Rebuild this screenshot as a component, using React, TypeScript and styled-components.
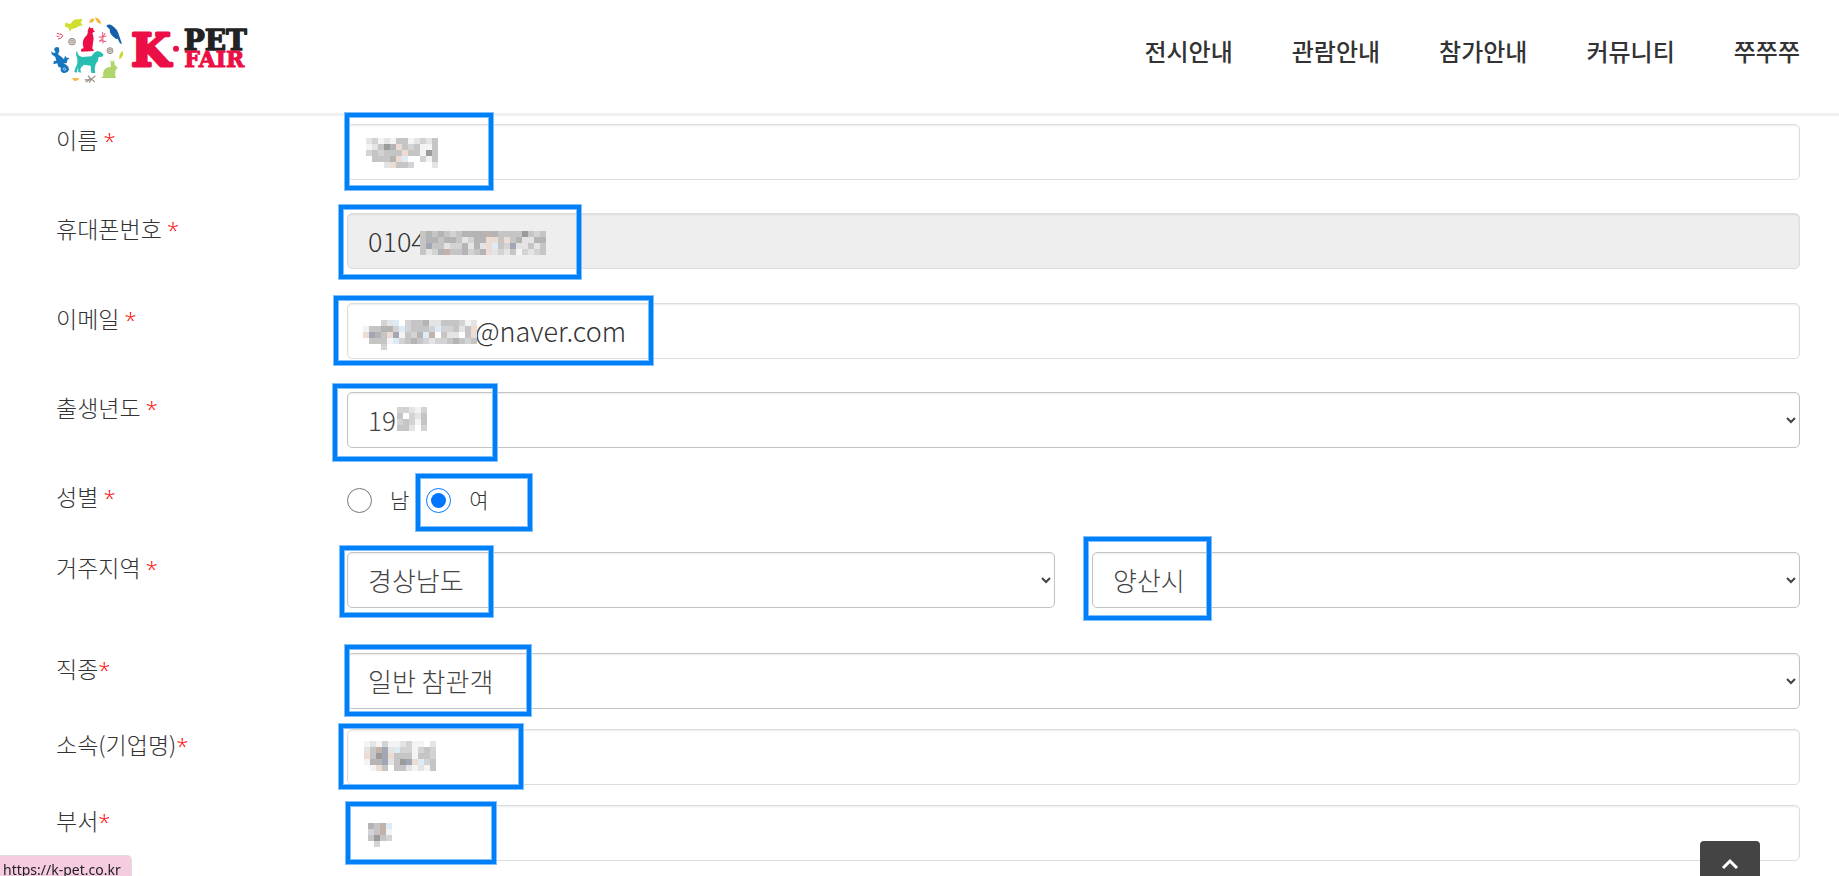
import React from 'react';
import styled, { createGlobalStyle } from 'styled-components';

const GlobalStyle = createGlobalStyle`
  *, *::before, *::after { box-sizing: border-box; }
  body {
    margin: 0;
    background: #fff;
    color: #333;
    font-family: 'Noto Sans CJK KR', sans-serif;
    font-weight: 300;
    overflow-x: hidden;
  }
  input, select, button { font-family: inherit; font-weight: inherit; }
`;

const Header = styled.header`
  display: flex;
  justify-content: space-between;
  align-items: flex-start;
  height: 116px;
  padding: 15px 39px 0 50px;
  border-bottom: 3px solid #efefef;
`;

const LogoLink = styled.a`
  display: block;
  line-height: 0;
`;

const Nav = styled.nav`
  display: flex;
  gap: 59px;
  padding-top: 18px;
`;

const NavLink = styled.a`
  color: #333;
  font-size: 24px;
  line-height: 36px;
  font-weight: 500;
  text-decoration: none;
`;

const Form = styled.form`
  padding: 8px 39px 14px 56px;
`;

const Row = styled.div<{ $gap?: number }>`
  display: grid;
  grid-template-columns: 291px minmax(0, 1fr);
  margin-bottom: ${p => p.$gap ?? 33}px;
`;

const Label = styled.label`
  font-size: 23px;
  line-height: 30px;
`;

const Required = styled.span`
  color: #f00;
  font-family: 'Open Sans', sans-serif;
  font-size: 22px;
`;

const Field = styled.div`
  position: relative;
  flex: 1;
  min-width: 0;
`;

const Pair = styled.div`
  display: flex;
  gap: 37px;
`;

const TextInput = styled.input<{ $indent?: number }>`
  display: block;
  width: 100%;
  height: 56px;
  padding: 0 20px 2px ${p => p.$indent ?? 20}px;
  border: 1px solid #ddd;
  border-radius: 5px;
  background: ${p => (p.readOnly ? '#eee' : '#fff')};
  box-shadow: inset 0 1px 2px rgba(0, 0, 0, 0.08);
  color: #333;
  font-size: 27px;
`;

const Select = styled.select`
  display: block;
  width: 100%;
  height: 56px;
  padding: 0 16px 2px;
  border: 1px solid #c4c4c4;
  border-radius: 5px;
  background: #fff;
  box-shadow: inset 0 1px 2px rgba(0, 0, 0, 0.08);
  color: #444;
  font-size: 26px;
`;

const RadioGroup = styled.div`
  position: relative;
  display: flex;
  align-items: center;
  height: 38px;
`;

const Radio = styled.input`
  width: 25px;
  height: 25px;
  margin: 0 18px 0 0;
  accent-color: #0075ff;
`;

const RadioLabel = styled.label`
  margin-right: 17px;
  padding-bottom: 2px;
  font-size: 21px;
  line-height: 30px;
`;

const Highlight = styled.span<{ $x: number; $y: number; $w: number; $h: number }>`
  position: absolute;
  left: ${p => p.$x}px;
  top: ${p => p.$y}px;
  width: ${p => p.$w}px;
  height: ${p => p.$h}px;
  border: 4px solid #0080f8;
  box-shadow: 0 0 0 1px #7fbffb, inset 0 0 0 1px #7fbffb;
  pointer-events: none;
`;

const MosaicSvg = styled.svg<{ $x: number; $y: number }>`
  position: absolute;
  left: ${p => p.$x}px;
  top: ${p => p.$y}px;
  pointer-events: none;
`;

const StatusUrl = styled.div`
  position: fixed;
  left: 0;
  bottom: 0;
  height: 21px;
  padding: 3px 10px 0 3px;
  border-top: 1px solid #ddd;
  border-right: 1px solid #ddd;
  border-top-right-radius: 5px;
  background: #f6cce0;
  color: #222;
  font-family: 'Noto Sans', sans-serif;
  font-weight: 400;
  font-size: 14px;
  line-height: 21px;
`;

const TopButton = styled.button`
  position: fixed;
  right: 79px;
  bottom: 0;
  width: 60px;
  height: 35px;
  padding: 10px 0 0;
  border: 0;
  border-radius: 4px 4px 0 0;
  background: #444;
  line-height: 0;
`;

const shades: Record<string, string> = {
  a: '#f4f4f4', b: '#e4e4e4', c: '#d3d3d5', d: '#c5c5c5', e: '#b4b4b4', f: '#9b9b9b',
  p: '#ecdcd4', q: '#dcebf6', r: '#a2a7b6', o: '#c3b2aa', w: '#fff',
};

function Mosaic({ x, y, rows }: { x: number; y: number; rows: string[] }) {
  const cols = Math.max(...rows.map(r => r.length));
  return (
    <MosaicSvg $x={x} $y={y} width={cols * 6} height={rows.length * 6} shapeRendering="crispEdges" aria-hidden="true">
      {rows.flatMap((row, j) =>
        row.split('').map((c, i) =>
          shades[c] ? <rect key={`${i}-${j}`} x={i * 6} y={j * 6} width={6} height={6} fill={shades[c]} /> : null,
        ),
      )}
    </MosaicSvg>
  );
}

function Logo() {
  return (
    <svg width="202" height="70" viewBox="60 45 606 210" role="img" aria-label="K-PET FAIR">
      <path d="M106 68 L122 72 Q128 57 144 58 L158 57 L152 68 L159 76 L146 79 Q136 88 125 86 L119 96 L116 84 L105 80Z" fill="#cfdf2b" />
      <path d="M177 68 Q182 52 194 57 L188 67Z M194 52 Q210 54 214 72 L203 68Z" fill="#f9b233" />
      <path d="M178 80 L183 85 L189 83 L190 90 L195 94 L187 99 Q193 112 189 128 L187 145 L192 153 L154 155 Q150 146 161 145 Q154 126 165 111 Q175 103 173 92Z" fill="#eb0f45" />
      <path d="M80 102 Q83 97 89 103 Q96 100 98 107 Q96 116 84 117 M80 109 L88 109" fill="none" stroke="#e9486c" strokeWidth="3" />
      <path d="M218 96 L219 130 M206 112 L229 108 M209 126 L226 99 M208 121 L229 125" fill="none" stroke="#ec4f78" strokeWidth="3" />
      <g fill="#d8d2cc" stroke="#9b928a" strokeWidth="3">
        <circle cx="126" cy="125" r="10" />
        <circle cx="240" cy="152" r="9" />
      </g>
      <path d="M119 124 Q126 116 132 124 Q127 132 122 126 M234 151 Q240 144 245 151 Q240 158 236 153" fill="none" stroke="#8e857d" strokeWidth="2" />
      <path d="M229 78 Q236 70 247 77 Q263 88 266 103 L276 132 L270 130 L263 116 L258 117 L250 110 Q239 103 239 88Z" fill="#165daa" />
      <path d="M72 148 Q77 137 87 143 L88 153 L84 163 L94 170 L102 178 L105 167 L110 173 L119 174 L112 180 L110 190 L100 190 Q117 196 117 210 Q111 222 98 218 Q89 213 93 203 L85 200 L82 190 L70 193 L72 182 L79 183 L76 171 L65 163 L64 153 L69 158 L77 158Z" fill="#1676bd" />
      <path d="M98 207 Q105 200 108 208 Q104 214 100 209" fill="none" stroke="#fff" strokeWidth="2" />
      <path d="M141 153 Q143 169 157 171 L184 169 Q192 156 202 153 L212 156 L221 164 L217 170 L206 171 Q205 185 197 192 L194 207 L196 219 L184 219 L182 197 L162 194 Q154 199 151 207 L153 218 L145 216 L144 202 L140 218 L133 216 Q136 201 142 191 L142 176 Q136 166 139 154Z" fill="#27bdb1" />
      <path d="M241 180 L247 186 L252 179 L254 194 L263 204 L257 210 L255 223 L258 234 L214 234 L220 227 Q217 207 234 202 L243 200Z" fill="#afd66b" />
      <path d="M268 173 Q268 157 279 153 L279 165 Q275 176 268 178Z" fill="#c9dc2c" />
      <path d="M125 234 L147 235 Q145 243 134 243Z" fill="#f9b233" />
      <path d="M164 239 Q179 243 196 228 M174 227 L182 237 M178 248 L184 237 L194 245 M167 246 L178 240" fill="none" stroke="#9e9389" strokeWidth="4" />
      <g fontFamily="'DejaVu Serif', serif" fontWeight="700" strokeLinejoin="round">
        <text x="304" y="199" fontSize="136" fill="#eb0f45" stroke="#eb0f45" strokeWidth="9">K</text>
        <circle cx="438" cy="146" r="9" fill="#eb0f45" />
        <text x="461" y="150" fontSize="84" fill="#222" stroke="#222" strokeWidth="4">PET</text>
        <text x="463" y="201" fontSize="66" fill="#eb0f45" stroke="#eb0f45" strokeWidth="3">FAIR</text>
      </g>
    </svg>
  );
}

const menu = ['전시안내', '관람안내', '참가안내', '커뮤니티', '쭈쭈쭈'];

export default function App() {
  return (
    <>
      <GlobalStyle />
      <Header>
        <LogoLink href="#home"><Logo /></LogoLink>
        <Nav>
          {menu.map(item => <NavLink href="#menu" key={item}>{item}</NavLink>)}
        </Nav>
      </Header>
      <Form>
        <Row>
          <Label htmlFor="name">이름 <Required>*</Required></Label>
          <Field>
            <TextInput id="name" type="text" />
            <Mosaic x={19} y={14} rows={['bcabaddabcbd', 'abdfepdcdaad', 'cdcdddpddafd', '.dddepqw.cad', '...bpddc...b']} />
            <Highlight $x={-2} $y={-11} $w={148} $h={77} />
          </Field>
        </Row>
        <Row $gap={34}>
          <Label htmlFor="phone">휴대폰번호 <Required>*</Required></Label>
          <Field>
            <TextInput id="phone" type="tel" readOnly defaultValue="0104" />
            <Mosaic x={73} y={18} rows={['dededcdeeeeoeddddfdcd', 'deedeedbceeppdpdebbee', 'drddbccebebpqdcrbbdbd', 'dbceoddecdepbcbdacbcd']} />
            <Highlight $x={-8} $y={-8} $w={242} $h={74} />
          </Field>
        </Row>
        <Row>
          <Label htmlFor="email">이메일 <Required>*</Required></Label>
          <Field>
            <TextInput id="email" type="email" $indent={127} defaultValue="@naver.com" />
            <Mosaic x={16} y={17} rows={['...cbq.cddebbdddcab', 'addeecqcdddcqccdbdp', 'predpradceqowdbbwdp', '.dddaqcdedcbccdedcd', '...c']} />
            <Highlight $x={-13} $y={-7} $w={319} $h={69} />
          </Field>
        </Row>
        <Row>
          <Label htmlFor="birth">출생년도 <Required>*</Required></Label>
          <Field>
            <Select id="birth" defaultValue="19"><option>19</option></Select>
            <Mosaic x={50} y={15} rows={['ccbac', 'dwcbd', 'cdcad', 'ddb.c']} />
            <Highlight $x={-14} $y={-8} $w={164} $h={77} />
          </Field>
        </Row>
        <Row>
          <Label as="span" id="gender">성별 <Required>*</Required></Label>
          <RadioGroup role="radiogroup" aria-labelledby="gender">
            <Radio type="radio" name="gender" id="male" />
            <RadioLabel htmlFor="male">남</RadioLabel>
            <Radio type="radio" name="gender" id="female" defaultChecked />
            <RadioLabel htmlFor="female">여</RadioLabel>
            <Highlight $x={69} $y={-7} $w={116} $h={57} />
          </RadioGroup>
        </Row>
        <Row $gap={45}>
          <Label htmlFor="region">거주지역 <Required>*</Required></Label>
          <Pair>
            <Field>
              <Select id="region" defaultValue="경상남도"><option>경상남도</option></Select>
              <Highlight $x={-7} $y={-6} $w={153} $h={71} />
            </Field>
            <Field>
              <Select id="city" aria-label="시/군/구" defaultValue="양산시"><option>양산시</option></Select>
              <Highlight $x={-8} $y={-15} $w={127} $h={83} />
            </Field>
          </Pair>
        </Row>
        <Row $gap={20}>
          <Label htmlFor="job">직종<Required>*</Required></Label>
          <Field>
            <Select id="job" defaultValue="일반 참관객"><option>일반 참관객</option></Select>
            <Highlight $x={-2} $y={-8} $w={186} $h={71} />
          </Field>
        </Row>
        <Row $gap={20}>
          <Label htmlFor="company">소속(기업명)<Required>*</Required></Label>
          <Field>
            <TextInput id="company" type="text" />
            <Mosaic x={17} y={12} rows={['abacaabcaa.b', 'bdorbqccacdc', 'pdfrpdddaddc', 'aeerbdfrpqcd', '.apd.ddbabad']} />
            <Highlight $x={-8} $y={-5} $w={184} $h={65} />
          </Field>
        </Row>
        <Row $gap={0}>
          <Label htmlFor="dept">부서<Required>*</Required></Label>
          <Field>
            <TextInput id="dept" type="text" />
            <Mosaic x={21} y={18} rows={['edoq', 'cdoa', 'dfdc', '.c..']} />
            <Highlight $x={-1} $y={-3} $w={150} $h={62} />
          </Field>
        </Row>
      </Form>
      <StatusUrl>https://k-pet.co.kr</StatusUrl>
      <TopButton type="button" aria-label="맨 위로">
        <svg width="18" height="12" viewBox="0 0 18 12" fill="none" stroke="#fff" strokeWidth="3">
          <path d="M2 10 L9 3 L16 10" />
        </svg>
      </TopButton>
    </>
  );
}
